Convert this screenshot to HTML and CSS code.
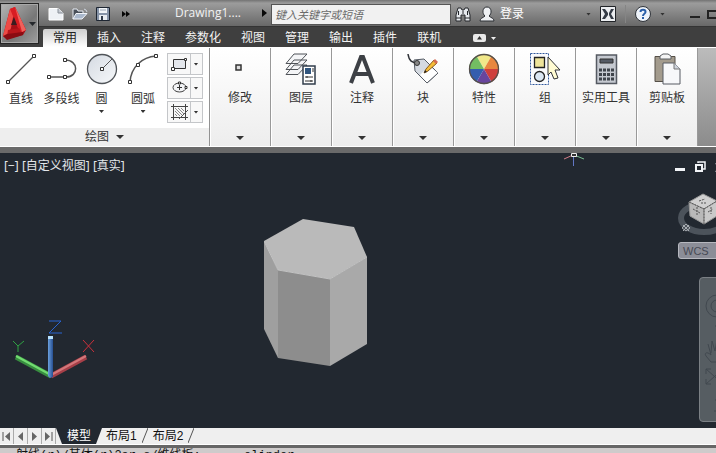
FILE: index.html
```
<!DOCTYPE html>
<html lang="zh-CN">
<head>
<meta charset="utf-8">
<title>Drawing1</title>
<link rel="stylesheet" href="styles.css">
</head>
<body>
<div class="app">
  <header class="header">
    <div class="titlebar">
      <div class="quick">
        <button class="tool" aria-label="新建"><svg width="16" height="14" viewBox="0 0 16 14"><path d="M1 1.500H10L15 6V13H1Z" fill="#eef1f5" stroke="#fff"/><path d="M10 1.500V6H15" fill="#c5cad2" stroke="#8a9099"/></svg></button>
        <button class="tool" aria-label="打开"><svg width="16" height="14" viewBox="0 0 16 14"><path d="M1 12V2H5L6 4H11V6" fill="#4a505a" stroke="#e8edf4"/><path d="M1 12L4 6.500H15L10 12Z" fill="#aab8cc" stroke="#f2f5fa"/><path d="M12 2l2 1 1 2" fill="none" stroke="#cfd6e0"/></svg></button>
        <button class="tool" aria-label="保存"><svg width="14" height="14" viewBox="0 0 14 14"><path d="M.5 .5H13.500V13.500H.5Z" fill="#8794a8" stroke="#1e2632"/><path d="M3 1H11V6H3Z" fill="#f2f5f8"/><path d="M4 3H10" stroke="#9aa5b4"/><path d="M3 8H11V13H3Z" fill="#e9edf2"/><path d="M5 9H7V13H5Z" fill="#303a48"/></svg></button>
        <button class="tool small" aria-label="更多"><svg width="8" height="6" viewBox="0 0 8 6"><path d="M0 0L4 3L0 6ZM4 0L8 3L4 6Z" fill="#050505"/></svg></button>
      </div>
      <h1 class="doc">Drawing1....</h1>
      <button class="tool expand" aria-label="展开"><svg width="5" height="8" viewBox="0 0 5 8"><path d="M0 0L5 4L0 8Z" fill="#080808"/></svg></button>
      <input class="search" type="text" aria-label="搜索" placeholder="键入关键字或短语">
      <div class="account">
        <button class="tool" aria-label="查找"><svg width="16" height="16" viewBox="0 0 16 16"><path d="M1 15V9L3 2H6L7 4H9L10 2H13L15 9V15H10V9H6V15Z" fill="#e5e8ec" stroke="#24272b"/><path d="M3.500 5V9M12.500 5V9M8 5V8M1 12H6M10 12H15" stroke="#24272b"/></svg></button>
        <button class="tool signin"><svg width="16" height="16" viewBox="0 0 16 16"><path d="M1 15C1 12 4 12 6 10C3 8 3 1 8 1C13 1 13 8 10 10C12 12 15 12 15 15Z" fill="#eef0f3" stroke="#2d3035"/></svg><span>登录</span></button>
      </div>
      <div class="services">
        <span class="caret dark"></span>
        <button class="tool" aria-label="Exchange"><svg width="16" height="16" viewBox="0 0 16 16"><path d="M.5 .5H15.500V15.500H.5Z" fill="#eceef1" stroke="#202327"/><path d="M2 3H5L8 7V9L5 13H2L5 8ZM14 3H11L9 7V9L11 13H14L11 8Z" fill="#343b46"/></svg></button>
        <span class="rule"></span>
        <button class="tool" aria-label="帮助"><svg width="16" height="16" viewBox="0 0 16 16"><circle cx="8" cy="8" r="7.500" fill="#eef3fa" stroke="#30343a"/><path d="M5.500 6C5.500 3 10.500 3 10.500 6C10.500 8 8 7.500 8 10" fill="none" stroke="#2b5fa8" stroke-width="2"/><path d="M7 11H9V13H7Z" fill="#2b5fa8"/></svg></button>
        <span class="caret dark"></span>
      </div>
      <div class="window-buttons">
        <button class="tool" aria-label="最小化"><svg width="11" height="9" viewBox="0 0 11 9"><path d="M1 7H11" stroke="#222" stroke-width="2"/></svg></button>
        <button class="tool" aria-label="最大化"><svg width="11" height="9" viewBox="0 0 11 9"><path d="M1 1H10V8H1Z" fill="none" stroke="#222" stroke-width="2"/></svg></button>
      </div>
    </div>
    <nav class="tabs">
      <button class="tab active">常用</button><button class="tab">插入</button><button class="tab">注释</button><button class="tab">参数化</button><button class="tab">视图</button><button class="tab">管理</button><button class="tab">输出</button><button class="tab">插件</button><button class="tab">联机</button>
      <button class="tool collapse" aria-label="最小化功能区"><svg width="24" height="8" viewBox="0 0 24 8"><rect width="13" height="8" rx="2" fill="#e9e9e9"/><path d="M4 5.500L6.500 2L9 5.500Z" fill="#333"/><path d="M18 3H23L20.500 6Z" fill="#eee"/></svg></button>
    </nav>
    <button class="app-button" aria-label="应用程序菜单">
      <svg width="36" height="38" viewBox="0 0 36 38"><path d="M2 32L9 5L14 3L25 26L22 31L6 35Z" fill="#a60f16"/><path d="M2 32L9 5L14 3L10 24L6 34Z" fill="#ee4a45"/><path d="M9 5L14 3L25 26L19 29Z" fill="#d91d23"/><path d="M14 3L16 7L25 26L21 28Z" fill="#f0615b"/><path d="M10 21L13 13L16 21Z" fill="#3b1c1f"/><path d="M7 26L18 24L20 28L6 32Z" fill="#b8151b"/><path d="M2 32L6 30L22 28V31L6 36Z" fill="#8a0b12"/><path d="M28 18H35L31.500 22Z" fill="#24272b"/></svg>
    </button>
  </header>

  <main class="ribbon">
    <section class="draw">
      <div class="draw-tools">
        <button class="big"><svg width="30" height="32" viewBox="0 0 30 32"><path d="M2 29L28 3" stroke="#555" stroke-width="1.300"/><path d="M.5 27.500h3v3h-3zM26.500 1.500h3v3h-3z" fill="#fff" stroke="#333"/></svg><span>直线</span></button>
        <button class="big"><svg width="32" height="32" viewBox="0 0 32 32"><path d="M3 24H20C33 24 33 7 19 7" fill="none" stroke="#555" stroke-width="1.500"/><path d="M1.500 22.500h3v3h-3zM17.500 22.500h3v3h-3zM17.500 5.500h3v3h-3z" fill="#fff" stroke="#333"/></svg><span>多段线</span></button>
        <button class="big"><svg width="32" height="32" viewBox="0 0 32 32"><defs><linearGradient id="disc" x2="1" y2="1"><stop stop-color="#d5dae2"/><stop offset="1" stop-color="#f6f8fa"/></linearGradient></defs><circle cx="16" cy="16" r="14.500" fill="url(#disc)" stroke="#505459" stroke-width="1.300"/><path d="M16 16L26 6" stroke="#555"/><path d="M14.500 14.500h3v3h-3z" fill="#fff" stroke="#333"/></svg><span>圆</span><i class="caret"></i></button>
        <button class="big"><svg width="32" height="32" viewBox="0 0 32 32"><path d="M3 29C4 14 15 4 29 3" fill="none" stroke="#555" stroke-width="1.500"/><path d="M1.500 27.500h3v3h-3zM9.500 10.500h3v3h-3zM27.500 1.500h3v3h-3z" fill="#fff" stroke="#333"/></svg><span>圆弧</span><i class="caret"></i></button>
        <div class="stack">
          <button class="split" aria-label="矩形"><svg width="22" height="20" viewBox="0 0 22 20"><path d="M5.500 5.500H17.500V14.500H5.500Z" fill="#e4e7ec" stroke="#333"/><path d="M3.500 13.500h3v3h-3zM16.500 4.500h2v2h-2z" fill="#fff" stroke="#333"/></svg><i class="caret"></i></button>
          <button class="split" aria-label="椭圆"><svg width="22" height="20" viewBox="0 0 22 20"><ellipse cx="11.500" cy="9.500" rx="6.500" ry="4.500" fill="#f3f4f6" stroke="#444"/><path d="M9 9.500H14M11.500 7V12" stroke="#333"/><path d="M10.500 4h2v2h-2zM17 8.500h2v2h-2z" fill="#fff" stroke="#333"/></svg><i class="caret"></i></button>
          <button class="split" aria-label="图案填充"><svg width="22" height="20" viewBox="0 0 22 20"><path d="M3 4.500H20M3 15.500H20M5.500 2V18M17.500 2V18" stroke="#444"/><path d="M7 6L15 14M7 9L12 14M7 12L9 14M10 6L16 12M13 6L16 9" stroke="#888"/><path d="M11 17L20 8" stroke="#555"/></svg><i class="caret"></i></button>
        </div>
      </div>
      <button class="draw-title"><span>绘图</span><i class="caret wide"></i></button>
    </section>
    <button class="panel"><svg width="32" height="32" viewBox="0 0 32 32"><path d="M12 12H17V17H12Z" fill="#ddd" stroke="#333" stroke-width="1.500"/></svg><span>修改</span><i class="caret wide"></i></button>
    <button class="panel"><svg width="32" height="32" viewBox="0 0 32 32"><path d="M1 21.500L9 12H22L13 21.500ZM1 16.500L9 7H22L13 16.500ZM1 10.500L9 1H22L13 10.500Z" fill="#f4f5f7" stroke="#4f5358"/><path d="M18 13H30V31H18Z" fill="#fff" stroke="#303d4b" stroke-width="1.500"/><path d="M20 15H26V21H20Z" fill="#31567f"/><path d="M27 16H29M27 18H29M20 24H28M20 28H28" stroke="#333"/><path d="M22 23V25M26 27V29" stroke="#333"/></svg><span>图层</span><i class="caret wide"></i></button>
    <button class="panel"><svg width="32" height="32" viewBox="0 0 32 32"><path d="M5 30L15 4H17L27 30M9 21H23" fill="none" stroke="#3d4045" stroke-width="4"/></svg><span>注释</span><i class="caret wide"></i></button>
    <button class="panel"><svg width="32" height="32" viewBox="0 0 32 32"><path d="M7 7L17 6L31 20L20 30L8 18Z" fill="#d5dae1" stroke="#555b64"/><path d="M13 22L22 13L31 20L20 30Z" fill="#fff"/><path d="M31 20L20 30L8 18" fill="none" stroke="#555b64"/><path d="M1 1C2 8 5 10 11 10" fill="none" stroke="#303338" stroke-width="1.500"/><circle cx="10" cy="10" r="2.500" fill="#888" stroke="#333"/><path d="M17 20L19 16L27 7L30 10L21 18Z" fill="#f5bd38" stroke="#8a5b19"/><path d="M26 8L28 6L31 9L29 11Z" fill="#d46b54"/><path d="M17 20L18 17L20 19Z" fill="#252525"/></svg><span>块</span><i class="caret wide"></i></button>
    <button class="panel"><svg width="32" height="32" viewBox="0 0 32 32"><path d="M16 16L8.500 3A15 15 0 0 1 23.500 3Z" fill="#f1e889"/><path d="M16 16L23.500 3A15 15 0 0 1 31 16Z" fill="#e8873f"/><path d="M16 16H31A15 15 0 0 1 23.500 29Z" fill="#cf3f3c"/><path d="M16 16L23.500 29A15 15 0 0 1 8.500 29Z" fill="#68459e"/><path d="M16 16L8.500 29A15 15 0 0 1 1 16Z" fill="#345eae"/><path d="M16 16H1A15 15 0 0 1 8.500 3Z" fill="#73bd62"/><circle cx="16" cy="16" r="14.500" fill="none" stroke="#55504b" stroke-width="1.300"/></svg><span>特性</span><i class="caret wide"></i></button>
    <button class="panel"><svg width="32" height="34" viewBox="0 0 32 34"><path d="M1.500 1.500H19.500V32.500H1.500Z" fill="#fafbfd" stroke="#31599c" stroke-dasharray="2 1"/><path d="M5.500 5.500H15.500V15.500H5.500Z" fill="#eee49a" stroke="#222" stroke-width="1.300"/><circle cx="10.500" cy="24.500" r="5" fill="#dbe7f3" stroke="#222" stroke-width="1.300"/><path d="M19 5L31 18L26 18L29 26L25 27L22 20L19 23Z" fill="#fffbd2" stroke="#303236"/></svg><span>组</span><i class="caret wide"></i></button>
    <button class="panel"><svg width="32" height="32" viewBox="0 0 32 32"><path d="M6.500 2H26.500V30.500H6.500Z" fill="#c5c9d0" stroke="#555a62" stroke-width="1.500"/><path d="M10 6H23V10H10Z" fill="#555b65" stroke="#333"/><path d="M9 17H24M9 21.500H24M9 26H24" stroke="#3f444b" stroke-width="3" stroke-dasharray="3 1"/></svg><span>实用工具</span><i class="caret wide"></i></button>
    <button class="panel"><svg width="32" height="32" viewBox="0 0 32 32"><path d="M4 3.500H24V28.500H4Z" fill="#a39b8d" stroke="#554f47"/><path d="M9 6V3L12 1H17L20 3V6Z" fill="#f5f5f5" stroke="#5b5e63"/><path d="M12 10H23L29 16V31H12Z" fill="#f7f8fa" stroke="#565b62"/><path d="M23 10V16H29" fill="#cfd4dc" stroke="#777"/></svg><span>剪贴板</span><i class="caret wide"></i></button>
  </main>

  <section class="viewport">
    <div class="view-label">[−] [自定义视图] [真实]</div>
    <svg class="cursor" width="22" height="14" viewBox="0 0 22 14"><path d="M1 6L10 2" stroke="#d07c87"/><path d="M11 2L21 6" stroke="#79bd91"/><path d="M10.500 3V13" stroke="#6277c4"/><path d="M8.500 .5H13.500V3.500H8.500Z" fill="#333" stroke="#eee"/></svg>
    <svg class="solid" width="104" height="148" viewBox="0 0 104 148"><path d="M0 22L14 51V139L0 110Z" fill="#9f9f9f"/><path d="M14 51L66 60V147L14 139Z" fill="#8d8d8d"/><path d="M66 60L103 38V125L66 147Z" fill="#a9a9a9"/><path d="M39 0L90 8L103 38L66 60L14 51L0 22Z" fill="#bababa"/><path d="M0 22L14 51L66 60L103 38" fill="none" stroke="#c3c3c3"/></svg>
    <svg class="ucs" width="90" height="64" viewBox="0 0 90 64"><defs><linearGradient id="zaxis"><stop stop-color="#6ba0dd"/><stop offset="1" stop-color="#274f91"/></linearGradient></defs><path d="M4 37L39 56" stroke="#388d40" stroke-width="5"/><path d="M4 36L39 55" stroke="#72dc71" stroke-width="2"/><path d="M39 56L74 37" stroke="#a63f48" stroke-width="5"/><path d="M39 55L74 36" stroke="#d3777a" stroke-width="2"/><path d="M36 17H41V57L38 58L36 56Z" fill="url(#zaxis)"/><path d="M36 16H41V19H36Z" fill="#b9e3ff"/><path d="M37 1H49L37 13H50" fill="none" stroke="#2864d2"/><path d="M1 21L6 26L12 21M6 26V32" fill="none" stroke="#2fa343"/><path d="M71 20L82 32M82 20L71 32" stroke="#cb303b"/></svg>
    <aside class="view-tools">
      <div class="view-buttons">
        <button class="tool" aria-label="最小化视图"><svg width="11" height="12" viewBox="0 0 11 12"><path d="M0 7H10V10H0Z" fill="#f2f4f7"/></svg></button>
        <button class="tool" aria-label="还原视图"><svg width="11" height="12" viewBox="0 0 11 12"><path d="M3 2V1H10V8H8" fill="none" stroke="#f2f4f7" stroke-width="1.500"/><path d="M1 4H7V10H1Z" fill="none" stroke="#f2f4f7" stroke-width="2"/></svg></button>
        <button class="tool" aria-label="关闭视图"><svg width="11" height="12" viewBox="0 0 11 12"><path d="M1 2L10 11M10 2L1 11" stroke="#f2f4f7" stroke-width="2"/></svg></button>
      </div>
      <svg class="cube" width="52" height="46" viewBox="0 0 52 46"><ellipse cx="26" cy="25" rx="23" ry="14" fill="none" stroke="#4c535b" stroke-width="6"/><path d="M11 9L25 1L39 8L26 16Z" fill="#d0d0d0" stroke="#999"/><path d="M11 9L26 16V31L12 23Z" fill="#b9b9b9" stroke="#999"/><path d="M26 16L39 8V23L26 31Z" fill="#c9c9c9" stroke="#999"/><path d="M21 8L27 6M23 10H29M15 16L22 20M19 14V22M30 19L35 16M33 14V21" stroke="#555" stroke-dasharray="2 1"/><path d="M11 9L26 16V31M26 16L39 8" fill="none" stroke="#555" stroke-dasharray="2 1"/><path d="M8 31L12 35L8 38L4 35ZM5 32L11 38M11 32L5 38" fill="none" stroke="#a9adb2"/></svg>
      <button class="wcs">WCS</button>
      <div class="navbar" aria-hidden="true"><svg width="28" height="138" viewBox="0 0 28 138"><g fill="none" stroke="#41484f"><circle cx="17" cy="28" r="11"/><circle cx="17" cy="28" r="6"/><path d="M15 48H21M6 78L11 84H20L22 71M6 78C4 75 7 73 11 77L8 66M11 75L12 63L15 73L17 62L18 73L22 65V78M6 91L23 106M23 91L6 106M6 96V91H11M6 101V106H11M19 106H23V101M15 122H21M14 133H22"/></g></svg></div>
    </aside>
  </section>

  <nav class="layouts">
    <div class="pager">
      <button aria-label="第一个"><svg width="9" height="9" viewBox="0 0 9 9"><path d="M1 0V9" stroke="#555"/><path d="M8 0V9L3 4.500Z" fill="#666"/></svg></button>
      <button aria-label="上一个"><svg width="9" height="9" viewBox="0 0 9 9"><path d="M7 0V9L2 4.500Z" fill="#666"/></svg></button>
      <button aria-label="下一个"><svg width="9" height="9" viewBox="0 0 9 9"><path d="M2 0V9L7 4.500Z" fill="#666"/></svg></button>
      <button aria-label="最后一个"><svg width="9" height="9" viewBox="0 0 9 9"><path d="M8 0V9" stroke="#555"/><path d="M1 0V9L6 4.500Z" fill="#666"/></svg></button>
    </div>
    <button class="layout current">模型</button>
    <button class="layout">布局1</button>
    <svg class="slash" width="6" height="15" viewBox="0 0 6 15"><path d="M0 15L6 0" stroke="#555"/></svg>
    <button class="layout">布局2</button>
    <svg class="slash" width="6" height="15" viewBox="0 0 6 15"><path d="M0 15L6 0" stroke="#555"/></svg>
  </nav>
  <footer class="command"><span>射线(r)/其体(r)2ar s/维线板: ____ elinder</span></footer>
</div>
</body>
</html>
```
FILE: styles.css
```
* { box-sizing: border-box; }
body {
  margin: 0;
  font: 12px/16px "Noto Sans", "Noto Sans CJK SC", sans-serif;
  color: #333;
}
button {
  border: 0;
  padding: 0;
  background: none;
  color: inherit;
  font: inherit;
  white-space: nowrap;
}
svg { display: block; flex: none; }

.app {
  display: flex;
  flex-direction: column;
  height: 100vh;
  overflow: hidden;
}

/* Title bar and ribbon tabs, with the menu button beside both */
.header {
  display: grid;
  grid-template: 27px 20px / 39px minmax(0, 1fr);
  flex: none;
  background: #3f3f3f;
}
.titlebar {
  grid-area: 1 / 1 / 2 / 3;
  display: flex;
  align-items: center;
  padding-left: 48px;
  overflow: hidden;
  background: linear-gradient(#737373, #9c9c9c 12%, #686868);
  border-bottom: 1px solid #343434;
}
.tool {
  display: flex;
  align-items: center;
  flex: none;
}
.quick {
  display: flex;
  align-items: center;
  gap: 8px;
  width: 127px;
  padding-top: 2px;
}
.quick .small { margin-left: 4px; }
.doc {
  flex: none;
  width: 87px;
  margin: 0;
  color: #f1f1f1;
  font: 12px/16px "Open Sans", "Noto Sans", sans-serif;
}
.expand { width: 9px; }
.search {
  flex: none;
  width: 180px;
  height: 21px;
  margin-top: 2px;
  border: 1px solid #555;
  padding: 0 3px;
  background: #f1f1f1;
  font: italic 11px/16px "Noto Sans CJK SC", sans-serif;
}
.search::placeholder { color: #6a6a6a; opacity: 1; }
.account {
  display: flex;
  align-items: center;
  gap: 8px;
  margin-left: 4px;
  padding-top: 2px;
  color: #fff;
}
.signin { gap: 5px; }
.services {
  display: flex;
  align-items: center;
  gap: 9px;
  margin-left: auto;
  padding-top: 2px;
}
.window-buttons {
  display: flex;
  gap: 7px;
  width: 27px;
  margin-left: 24px;
  padding-top: 2px;
}
.rule { width: 1px; height: 18px; background: #858585; }

.app-button {
  grid-area: 1 / 1 / 3 / 2;
  align-self: center;
  height: 41px;
  margin-bottom: 1px;
  border: 1px solid #252525;
  background: linear-gradient(135deg, #b5b5b5, #777 60%, #a0a0a0);
  box-shadow: inset 0 0 0 1px #a8a8a8;
}
.tabs {
  grid-area: 2 / 2 / 3 / 3;
  display: flex;
  align-items: flex-end;
  padding-left: 4px;
  color: #f3f3f3;
}
.tab { height: 18px; padding: 0 10px; line-height: 18px; }
.tab.active {
  background: linear-gradient(#cfcfcf, #fff);
  border-radius: 2px 2px 0 0;
  color: #222;
}
.collapse { margin-left: 22px; height: 18px; }

.caret {
  flex: none;
  width: 5px;
  height: 3px;
  background: #333;
  clip-path: polygon(0 0, 100% 0, 50% 100%);
}
.caret.wide { width: 8px; height: 4px; }

/* Ribbon */
.ribbon {
  display: flex;
  flex: none;
  height: 106px;
  border-bottom: 6px solid #6a6a6a;
  padding: 1px 0;
  background: linear-gradient(#bcbcbc, #8b8b8b);
  box-shadow: inset 0 1px #fff, inset 0 -1px #fff;
}
.draw {
  display: flex;
  flex-direction: column;
  width: 210px;
  border-right: 1px solid #929292;
  background: #fff;
}
.draw-tools {
  display: flex;
  flex: 1;
  gap: 3px;
  padding: 5px 6px 4px 3px;
}
.big {
  display: flex;
  flex-direction: column;
  align-items: center;
  width: 36px;
}
.big span { margin-top: 5px; line-height: 18px; }
.big .caret { margin-top: 2px; }
.big:nth-child(2) { width: 39px; }
.big:nth-child(3) { width: 35px; }
.big:nth-child(4) { width: 42px; }
.stack {
  display: flex;
  flex-direction: column;
  gap: 2px;
  margin-left: auto;
}
.split {
  display: grid;
  grid-template-columns: 22px 12px;
  align-items: center;
  justify-items: center;
  border: 1px solid #c4c6c9;
  background: linear-gradient(to right, #f8f8f8 22px, #c4c6c9 22px, #c4c6c9 23px, #f8f8f8 23px);
}
.draw-title {
  display: flex;
  align-items: center;
  justify-content: center;
  gap: 7px;
  height: 18px;
  flex: none;
  background: #eee;
}
.panel {
  display: flex;
  flex-direction: column;
  align-items: center;
  flex: none;
  width: 61px;
  border: solid #999;
  border-width: 0 1px 0 0;
  padding: 4px 0 6px;
  background: linear-gradient(#fff, #ededed);
  box-shadow: inset 1px 0 #fff;
}
.panel svg { height: 34px; }
.panel span { margin-top: 3px; line-height: 18px; }
.panel .caret { margin-top: auto; }

/* Drawing area: its objects sit at free positions */
.viewport {
  position: relative;
  flex: 1;
  min-height: 0;
  overflow: hidden;
  background: #222830;
}
.view-label { padding: 5px 4px; color: #e4e7eb; }
.cursor { position: absolute; left: 563px; top: 0; }
.solid { position: absolute; left: 264px; top: 66px; }
.ucs { position: absolute; left: 12px; top: 167px; }
.view-tools {
  position: absolute;
  top: 8px;
  right: -14px;
  display: flex;
  flex-direction: column;
  align-items: flex-end;
  width: 56px;
}
.view-buttons { display: flex; gap: 9px; padding-right: 4px; }
.cube { margin-top: 20px; }
.wcs {
  width: 52px;
  height: 17px;
  margin-top: 3px;
  border: 1px solid #b6b8bf;
  border-radius: 3px;
  padding-left: 4px;
  background: #8b8d97;
  color: #474a55;
  font: 11px/14px "Liberation Sans", sans-serif;
  text-align: left;
}
.navbar {
  width: 31px;
  height: 145px;
  margin-top: 18px;
  border: 1px solid #7b8085;
  border-radius: 4px;
  background: #565d62;
}

/* Layout tabs */
.layouts {
  display: flex;
  flex: none;
  height: 17px;
  border-bottom: 1px solid #fff;
  background: #efefef;
  color: #111;
}
.pager { display: flex; }
.pager button {
  display: grid;
  place-items: center;
  width: 14px;
  border-right: 1px solid #aaa;
}
.layout { padding: 0 4px; font-family: "Liberation Sans", "Noto Sans CJK SC", sans-serif; }
.layout.current {
  width: 46px;
  background: #222830;
  clip-path: polygon(0 0, 100% 0, 87% 100%, 13% 100%);
  color: #fff;
}
.slash { margin: 0 1px; }
.command {
  flex: none;
  height: 8px;
  border-top: 3px solid #666;
  padding-left: 16px;
  overflow: hidden;
  background: #cecbcb;
  color: #111;
  font: 12px/16px "Liberation Mono", "Noto Sans CJK SC", monospace;
}
```
